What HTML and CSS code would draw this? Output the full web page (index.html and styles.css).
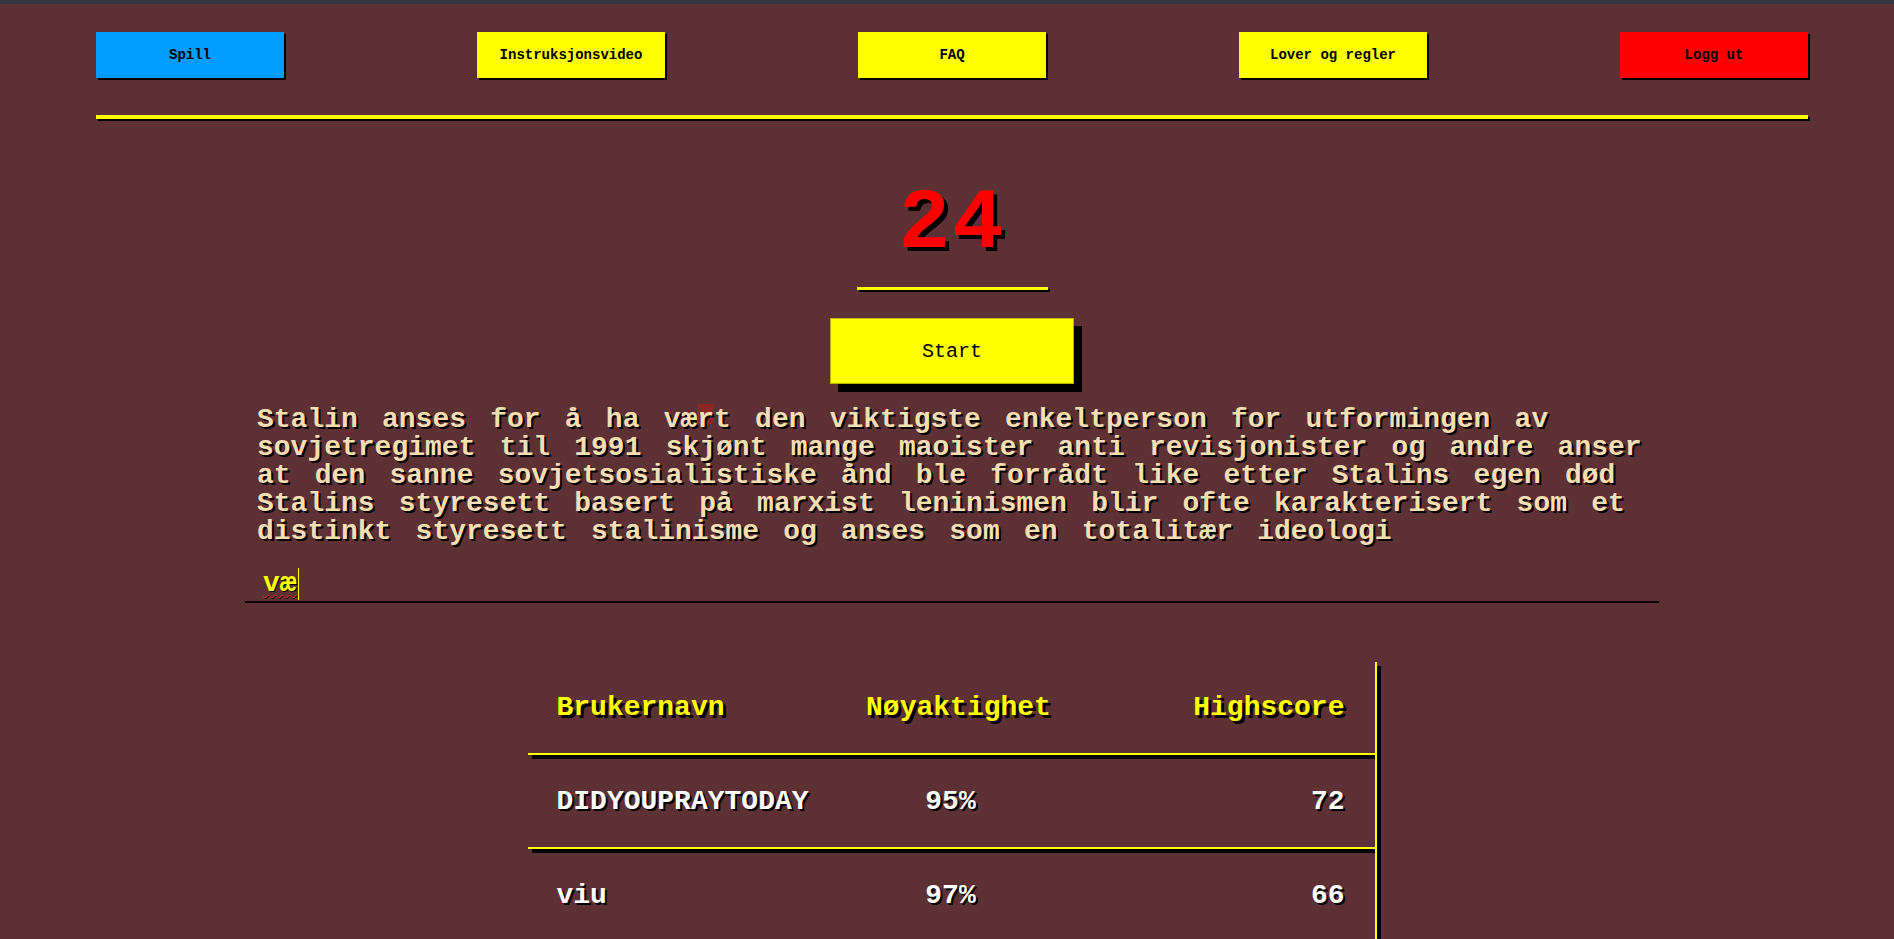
FILE: index.html
```html
<!DOCTYPE html>
<html lang="no">
<head>
<meta charset="utf-8">
<title>Skrivespill</title>
<link rel="stylesheet" href="styles.css">
</head>
<body>
<div class="topstrip"></div>
<div class="page">
  <nav class="nav">
    <a class="navbtn blue">Spill</a>
    <a class="navbtn yellow">Instruksjonsvideo</a>
    <a class="navbtn yellow">FAQ</a>
    <a class="navbtn yellow">Lover og regler</a>
    <a class="navbtn red">Logg ut</a>
  </nav>
  <div class="navline"></div>

  <h1 class="timer">24</h1>
  <div class="timerline"></div>
  <button class="startbtn">Start</button>

  <p class="passage">Stalin anses for å ha væ<span class="current">r</span>t den viktigste enkeltperson for utformingen av sovjetregimet til 1991 skjønt mange maoister anti revisjonister og andre anser at den sanne sovjetsosialistiske ånd ble forrådt like etter Stalins egen død Stalins styresett basert på marxist leninismen blir ofte karakterisert som et distinkt styresett stalinisme og anses som en totalitær ideologi</p>

  <div class="typing"><span class="typed">væ</span><span class="caret"></span></div>

  <div class="board">
    <div class="row head">
      <div class="c1">Brukernavn</div>
      <div class="c2">Nøyaktighet</div>
      <div class="c3">Highscore</div>
    </div>
    <div class="row">
      <div class="c1">DIDYOUPRAYTODAY</div>
      <div class="c2">95%</div>
      <div class="c3">72</div>
    </div>
    <div class="row">
      <div class="c1">viu</div>
      <div class="c2">97%</div>
      <div class="c3">66</div>
    </div>
  </div>
</div>
</body>
</html>
```
FILE: styles.css
```css
html, body {
  margin: 0;
  padding: 0;
}
body {
  background: #5d3133;
  font-family: "Liberation Mono", "Courier New", monospace;
  height: 939px;
  overflow: hidden;
}
.topstrip {
  height: 4px;
  background: #343642;
}
.page {
  width: 1712px;
  margin-left: 96px;
  display: flex;
  flex-direction: column;
}
.nav {
  display: flex;
  justify-content: space-between;
  padding-top: 28px;
}
.navbtn {
  width: 188px;
  height: 46px;
  display: flex;
  align-items: center;
  justify-content: center;
  font-size: 14px;
  font-weight: bold;
  color: #000;
  box-shadow: 2px 2px 0 #000;
}
.blue { background: #009cff; }
.yellow { background: #ffff00; }
.red { background: #ff0000; }
.navline {
  margin-top: 37px;
  height: 4px;
  background: #ffff00;
  box-shadow: 2px 2px 0 #000;
}
.timer {
  margin: 55px 0 0;
  text-align: center;
  font-size: 86px;
  font-weight: bold;
  color: #ff0000;
  line-height: 100px;
  letter-spacing: 2px;
  text-shadow: 4px 4px 0 #000;
}
.timerline {
  align-self: center;
  width: 191px;
  height: 3px;
  margin-top: 13px;
  background: #ffff00;
  box-shadow: 2px 2px 0 #000;
}
.startbtn {
  align-self: center;
  margin-top: 28px;
  width: 244px;
  height: 66px;
  background: #ffff00;
  border: 1px solid #b5b500;
  box-shadow: 8px 8px 0 #000;
  font-family: "Liberation Mono", "Courier New", monospace;
  font-size: 20px;
  color: #000;
  padding: 0;
}
.passage {
  align-self: center;
  width: 1414px;
  box-sizing: border-box;
  padding-left: 12px;
  margin: 22px 0 0;
  font-size: 28px;
  line-height: 28px;
  font-weight: bold;
  color: #f5deb3;
  word-spacing: 7.4px;
  text-shadow: 2px 2px 0 #000;
}
.current {
  background: linear-gradient(#8c2626, #8c2626) no-repeat 0 -2px / 100% 22px;
}
.typing {
  align-self: center;
  width: 1414px;
  box-sizing: border-box;
  margin-top: 21px;
  height: 36px;
  padding-left: 18px;
  border-bottom: 2px solid #000;
  display: flex;
  align-items: center;
}
.typed {
  font-size: 28px;
  font-weight: bold;
  color: #ffff00;
  line-height: 34px;
  text-shadow: 1px 1px 0 #000;
  text-decoration: underline wavy #e02020 1px;
  text-underline-offset: 3px;
}
.caret {
  width: 1px;
  height: 32px;
  background: #ffff00;
  margin-left: 1px;
}
.board {
  align-self: center;
  width: 849px;
  margin-top: 59px;
  display: flex;
  flex-direction: column;
}
.row {
  display: grid;
  grid-template-columns: 1fr 1fr 1fr;
  align-items: center;
  height: 92px;
  padding: 0 30px 0 29px;
  border-right: 2px solid #ffff00;
  border-bottom: 2px solid #ffff00;
  box-shadow: 4px 4px 0 #000;
  font-size: 28px;
  font-weight: bold;
  color: #ffffff;
  text-shadow: 2px 2px 0 #000;
}
.row.head {
  height: 91px;
  color: #ffff00;
  text-shadow: 3px 3px 0 #000;
}
.c1 { text-align: left; }
.c2 { text-align: center; }
.c3 { text-align: right; }
.row.head .c2 { padding-left: 16px; }
```
